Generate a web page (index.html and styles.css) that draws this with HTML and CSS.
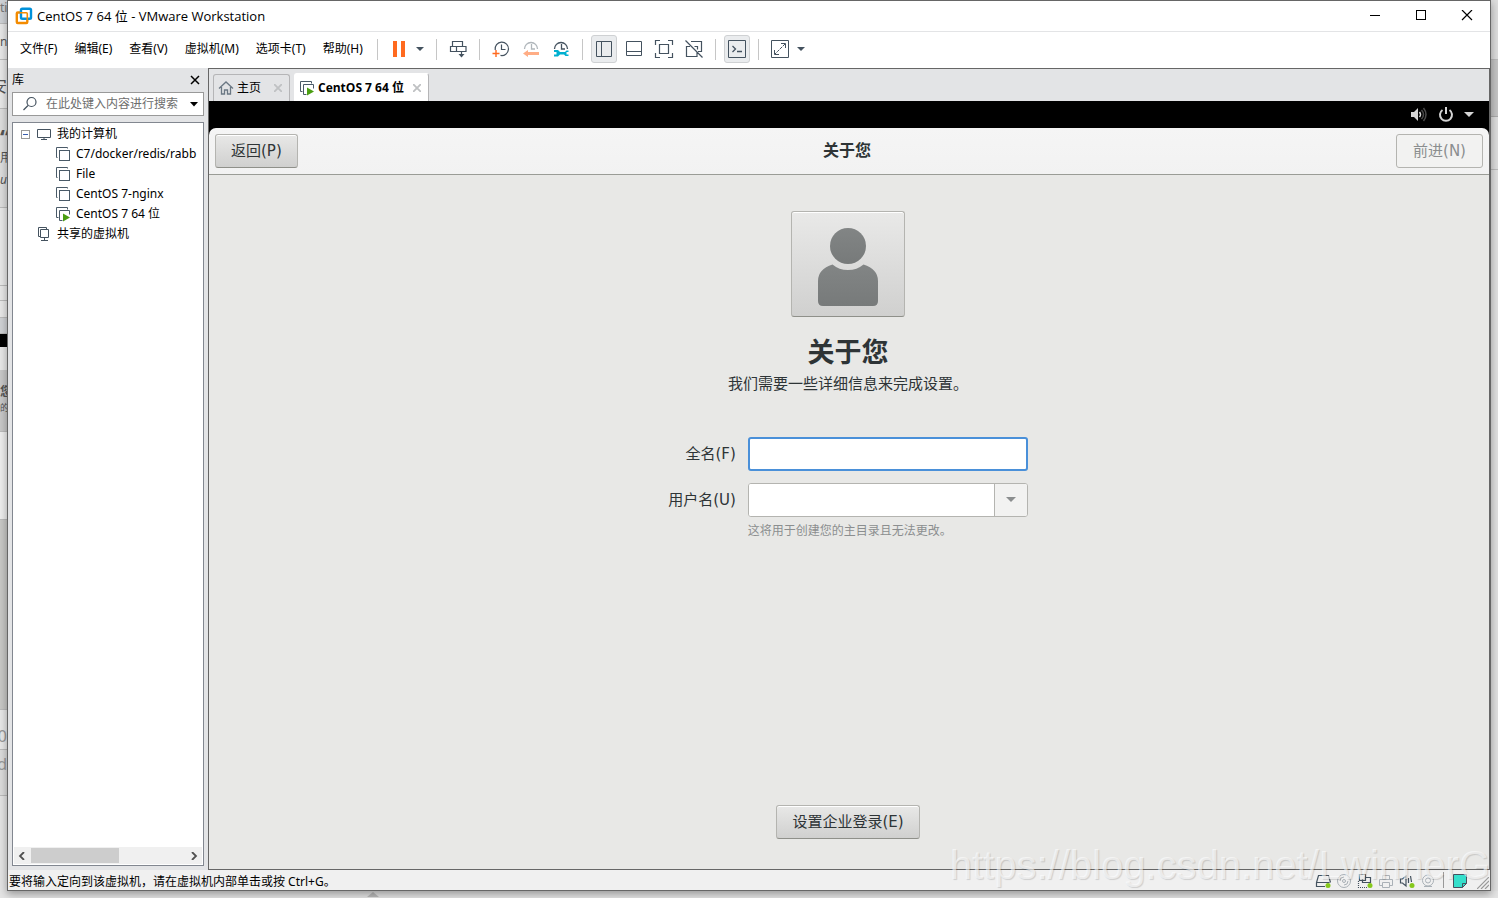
FILE: index.html
```
<!DOCTYPE html>
<html lang="zh-CN">
<head>
<meta charset="utf-8">
<title>CentOS 7 64 位 - VMware Workstation</title>
<link rel="stylesheet" href="styles.css">
</head>
<body>
<svg class="defs" aria-hidden="true">
  <symbol id="vm" viewBox="0 0 16 16"><path d="M1.500 11.500v-10h11" fill="none" stroke="#4a5a68"/><path d="M1.500 11.500h1M12.500 1.500v1" stroke="#4a5a68"/><rect x="4.500" y="4.500" width="10" height="10" fill="#fff" stroke="#4a5a68"/></symbol>
  <symbol id="vmon" viewBox="0 0 16 16"><path d="M3.500 11.500h-2v-10h11v2" fill="none" stroke="#4a5a68"/><path d="M7.500 14.500h-3v-10h10v4" fill="none" stroke="#4a5a68"/><path d="M8 7.500v8l7-4z" fill="#4a9e12"/></symbol>
</svg>
<div class="desktop">
  <div class="behind behind-left" aria-hidden="true">
    <div class="slab s1">ti</div><div class="slab s2">n</div><div class="slab s3">安</div><div class="slab s4"><b>“</b><span>用</span><i>u</i></div><div class="slab s5"></div><div class="slab s6"></div><div class="slab s7"></div><div class="slab s8"></div><div class="slab s9"><b>您</b><small>的</small></div><div class="slab s10"></div><div class="slab s11"></div><div class="slab s12">00</div><div class="slab s13">d</div><div class="slab s14"></div>
  </div>
  <main class="window">
    <header class="titlebar">
      <svg class="logo" width="18" height="18" viewBox="0 0 18 18" fill="none" stroke-width="2.400"><path d="M5 5.500H2.800q-1 0-1 1v8.500q0 1 1 1h8.500q1 0 1-1v-2" stroke="#f38b00"/><rect x="6" y="1.700" width="10" height="10" rx="1.300" stroke="#0091da"/><path d="M5 5.700h6.300q1 0 1 1V13" stroke="#f38b00" stroke-width="1.600"/></svg>
      <span class="caption">CentOS 7 64 位 - VMware Workstation</span>
      <button class="winbtn" aria-label="最小化"><svg width="12" height="12"><path d="M1 5.500h10" stroke="#000"/></svg></button>
      <button class="winbtn" aria-label="最大化"><svg width="12" height="12"><rect x="1.500" y=".5" width="9" height="9" fill="none" stroke="#000"/></svg></button>
      <button class="winbtn" aria-label="关闭"><svg width="12" height="12"><path d="M1 0l10 10M11 0L1 10" stroke="#000" stroke-width="1.200"/></svg></button>
    </header>
    <div class="menubar">
      <nav class="menus"><button>文件(F)</button><button>编辑(E)</button><button>查看(V)</button><button>虚拟机(M)</button><button>选项卡(T)</button><button>帮助(H)</button></nav>
      <div class="tools">
        <i class="sep"></i>
        <span class="group tight"><button class="tool" aria-label="暂停"><svg width="20" height="20"><path d="M4 2h4v16H4zM12 2h4v16h-4z" fill="#ff6a1f"/></svg></button><button class="drop" aria-label="电源选项"><svg width="8" height="5"><path d="M0 0h8L4 4z" fill="#44525f"/></svg></button></span>
        <i class="sep"></i>
        <button class="tool" aria-label="发送按键"><svg width="20" height="20" fill="none" stroke="#44525f" stroke-width="1.200"><path d="M4.500 2.500h10v5h-10zM8.500 7.500v5h-6v-5h15.500v5H8.500M13.500 12.500v4"/><path d="M10.500 15h6l-3 3.500z" fill="#44525f" stroke="none"/></svg></button>
        <i class="sep"></i>
        <span class="group">
          <button class="tool slate" aria-label="拍摄快照"><svg width="20" height="20"><path d="M4.200 11A6.700 6.700 0 1 1 9.500 16.400M10.500 5.500v5h4" fill="none" stroke="currentColor" stroke-width="1.200"/><path d="M1.500 14.500h7M5 11v7" stroke="#ff6a1f" stroke-width="1.400"/></svg></button>
          <button class="tool faded" aria-label="恢复快照"><svg width="20" height="20"><path d="M3.500 10a6.500 6.500 0 1 1 13 0M10.500 5v5h3.500" fill="none" stroke="currentColor" stroke-width="1.300"/><path d="M2 14.500l5-3.500v2h11v3H7v2z" fill="#ffad85"/></svg></button>
          <button class="tool slate" aria-label="管理快照"><svg width="20" height="20"><path d="M3.500 10a6.500 6.500 0 1 1 13 0M10.500 5v5h3.500" fill="none" stroke="currentColor" stroke-width="1.300"/><path d="M3 11h4l2 2h5l1.500-1.500h2V13h-2v2.500h2V17h-3L13 15.500H9L7 17.500H3v-2h2.500V13H3z" fill="#00b0d0"/></svg></button>
        </span>
        <i class="sep"></i>
        <span class="group">
          <button class="tool on" aria-label="显示库"><svg width="20" height="20" fill="none" stroke="#44525f"><path d="M2.500 2.500h15v15h-15zM7.500 2.500v15"/></svg></button>
          <button class="tool" aria-label="缩略图栏"><svg width="20" height="20" fill="none" stroke="#44525f"><path d="M2.500 2.500h15v14h-15zM2.500 12.500h15"/></svg></button>
          <button class="tool" aria-label="全屏"><svg width="20" height="20" fill="none" stroke="#44525f" stroke-width="1.200"><path d="M1.500 6V1.500H6M14 1.500h4.500V6M18.500 14v4.500H14M6 18.500H1.500V14M5.500 5.500h9v9h-9z"/></svg></button>
          <button class="tool" aria-label="Unity"><svg width="20" height="20" fill="none" stroke="#44525f" stroke-width="1.200"><path d="M7 2.500h10.500v10H14M6 7.500H2.500v10h10.500v-4M10.500 7.500h3v3M1.500 1.500l17 17"/></svg></button>
        </span>
        <i class="sep"></i>
        <button class="tool on" aria-label="控制台"><svg width="20" height="20" fill="none" stroke="#44525f"><path d="M1.500 1.500h17v17h-17z"/><path d="M5.500 7l3 3-3 3M10 12.500h5" stroke-width="1.300"/></svg></button>
        <i class="sep"></i>
        <span class="group tight"><button class="tool" aria-label="拉伸"><svg width="20" height="20" fill="none" stroke="#44525f"><path d="M1.500 1.500h17v17h-17zM11 4.500h4.500V9M4.500 11v4.500H9"/><path d="M15 5L5 15" stroke-dasharray="3 1"/></svg></button><button class="drop" aria-label="拉伸选项"><svg width="8" height="5"><path d="M0 0h8L4 4z" fill="#44525f"/></svg></button></span>
      </div>
    </div>
    <div class="workspace">
      <aside class="library">
        <div class="libhead"><span>库</span><button aria-label="关闭库"><svg width="10" height="10"><path d="M1 1l8 8M9 1L1 9" stroke="#000" stroke-width="1.500"/></svg></button></div>
        <label class="search"><svg width="16" height="16" fill="none" stroke="#44525f" stroke-width="1.200"><circle cx="9.500" cy="6" r="4.500"/><path d="M6 9.500L1.500 14"/></svg><input type="text" placeholder="在此处键入内容进行搜索" aria-label="搜索"><svg width="8" height="5"><path d="M0 0h8L4 4.500z"/></svg></label>
        <div class="treebox">
          <ul class="tree">
            <li class="root"><svg width="9" height="9"><rect x=".5" y=".5" width="8" height="8" fill="#fff" stroke="#999"/><path d="M2 4.500h5" stroke="#3a5fb0"/></svg><svg class="pc" width="16" height="16" fill="none" stroke="#44525f"><path d="M1.500 3.500h13v8h-13zM8 11.500v2M5 13.500h6"/></svg><span>我的计算机</span></li>
            <li class="leaf"><svg width="16" height="16"><use href="#vm"/></svg><span>C7/docker/redis/rabb</span></li>
            <li class="leaf"><svg width="16" height="16"><use href="#vm"/></svg><span>File</span></li>
            <li class="leaf"><svg width="16" height="16"><use href="#vm"/></svg><span>CentOS 7-nginx</span></li>
            <li class="leaf"><svg width="16" height="16"><use href="#vmon"/></svg><span>CentOS 7 64 位</span></li>
            <li class="shared"><svg width="16" height="16" fill="none" stroke="#44525f"><path d="M4 10.500H2.500v-9h8V3M4.500 3.500h8v8h-8zM8.500 11.500v3M5 14.500h7"/></svg><span>共享的虚拟机</span></li>
          </ul>
          <div class="hscroll"><svg width="8" height="8" fill="none" stroke="#505050" stroke-width="1.800"><path d="M6 0L2 4l4 4"/></svg><i></i><svg width="8" height="8" fill="none" stroke="#505050" stroke-width="1.800"><path d="M2 0l4 4-4 4"/></svg></div>
        </div>
      </aside>
      <section class="viewer">
        <div class="tabs">
          <div class="tab"><svg width="16" height="16" fill="none" stroke="#6b7884" stroke-width="1.300"><path d="M1 8.500L8 2l7 6.500M3.500 7v7h3v-4h3v4h3V7"/></svg><span>主页</span><button aria-label="关闭主页"><svg width="8" height="8"><path d="M0 0l8 8M8 0L0 8" stroke="#bfc1c3" stroke-width="1.800"/></svg></button></div>
          <div class="tab active"><svg width="16" height="16"><use href="#vmon"/></svg><span>CentOS 7 64 位</span><button aria-label="关闭标签"><svg width="8" height="8"><path d="M0 0l8 8M8 0L0 8" stroke="#bfc1c3" stroke-width="1.800"/></svg></button></div>
        </div>
        <div class="guest">
          <div class="topbar">
            <svg width="18" height="16"><path d="M1 5h3l4-4v13l-4-4H1z" fill="#d5d5d5"/><path d="M9.500 5q2 2.500 0 5" fill="none" stroke="#d5d5d5" stroke-width="1.500"/><path d="M11.500 3q4 4.500 0 9M13.500 1q5 6.500 0 13" fill="none" stroke="#4a4a4a" stroke-width="1.500"/></svg>
            <svg width="16" height="16" fill="none" stroke="#d5d5d5" stroke-width="2"><path d="M4.500 3a6 6 0 1 0 7 0M8 0v7"/></svg>
            <svg width="10" height="6"><path d="M0 0h10L5 5z" fill="#d5d5d5"/></svg>
          </div>
          <div class="headbar"><button class="gbtn">返回(P)</button><h1>关于您</h1><button class="gbtn" disabled>前进(N)</button></div>
          <div class="page">
            <button class="avatar" aria-label="头像"><svg width="60" height="78" viewBox="0 0 60 78"><defs><linearGradient id="g" x2="0" y2="1"><stop stop-color="#828585"/><stop offset="1" stop-color="#777a7a"/></linearGradient></defs><circle cx="30" cy="18" r="18" fill="url(#g)"/><path d="M14.500 36.500Q21 42 30 42t15.500-5.500Q60 41 60 53v20q0 5-5 5H5q-5 0-5-5V53Q0 41 14.500 36.500z" fill="url(#g)"/></svg></button>
            <h2>关于您</h2>
            <p class="intro">我们需要一些详细信息来完成设置。</p>
            <form class="form">
              <label for="full">全名(F)</label><input id="full" class="field focus" type="text">
              <label for="user">用户名(U)</label><div class="combo"><input id="user" type="text"><button type="button" aria-label="选择用户名"><svg width="10" height="6"><path d="M0 0h10L5 5z" fill="#8b8e8f"/></svg></button></div>
              <p class="hint">这将用于创建您的主目录且无法更改。</p>
            </form>
            <button class="gbtn enterprise">设置企业登录(E)</button>
          </div>
        </div>
      </section>
    </div>
    <footer class="status">
      <span class="msg">要将输入定向到该虚拟机，请在虚拟机内部单击或按 Ctrl+G。</span>
      <svg width="16" height="16" fill="none" stroke="#44525f" stroke-width="1.200"><path d="M10 13.500H1.500v-4l2-7h10l2 7M1.500 9.500h13"/><circle cx="13" cy="12.500" r="2.500" fill="#86c81c" stroke="none"/></svg>
      <svg width="16" height="16" fill="none" stroke="#aab1b7"><circle cx="8" cy="8" r="6.500"/><circle cx="8" cy="8" r="1.500"/><path d="M4 8a4 4 0 0 1 4-4M12 8a4 4 0 0 1-4 4"/></svg>
      <svg width="16" height="16" fill="none" stroke="#44525f" stroke-width="1.200"><path d="M2.500 1.500h6v6h-6zM8.500 4.500h5v5h-8v-3"/><path d="M1.500 8v6.500H11" stroke-dasharray="1 1"/><circle cx="13" cy="12.500" r="2.500" fill="#86c81c" stroke="none"/></svg>
      <svg width="16" height="16" fill="none" stroke="#aab1b7"><path d="M4.500 6V2.500h7V6M4.500 12.500h-3v-6h13v6h-3M4.500 9.500h7v5h-7z"/></svg>
      <svg width="16" height="16" fill="none" stroke="#44525f" stroke-width="1.200"><path d="M1.500 6h2L7 3v10L3.500 10h-2zM9.500 5v5M11.500 3l1 6"/><circle cx="13" cy="12.500" r="2.500" fill="#86c81c" stroke="none"/></svg>
      <svg width="16" height="16" fill="none" stroke="#aab1b7"><circle cx="8" cy="7.500" r="5.500"/><circle cx="8" cy="7.500" r="2.500"/><path d="M4 13.500h8"/></svg>
      <i class="ssep"></i>
      <svg class="note" width="14" height="14"><path d="M.5.500h13v9l-4 4h-9z" fill="#35dfcb" stroke="#44525f"/><path d="M13.500 9.500h-4v4" fill="none" stroke="#44525f"/></svg>
      <svg class="grip" width="12" height="12" stroke="#999" stroke-width="1.200"><path d="M0 12L12 0M4 12l8-8M8 12l4-4"/></svg>
    </footer>
  </main>
  <div class="behind behind-right" aria-hidden="true"><div class="r1"></div><div class="r2"></div><div class="r3"></div><div class="r4"></div></div>
  <div class="behind-bottom" aria-hidden="true"><svg width="14" height="6"><path d="M1 6l6-5 6 5z" fill="#bbb"/></svg></div>
  <div class="watermark">https://blog.csdn.net/LwinnerG</div>
</div>
</body>
</html>
```
FILE: styles.css
```
*{box-sizing:border-box}
body{margin:0;font:12px/16px "Noto Sans","Noto Sans CJK SC",sans-serif;color:#000;background:#e4e4e4}
button{font:inherit;color:inherit;background:none;border:0;padding:0;margin:0}
input{font:inherit;padding:0;margin:0;border:0;outline:0;min-width:0}
svg{display:block;flex:none}
h1,h2,p,ul{margin:0;padding:0}
.defs{position:absolute;width:0;height:0}
.desktop{position:relative;display:grid;grid-template:minmax(0,1fr) 7px / 7px minmax(0,1fr) 7px;height:100vh;overflow:hidden}
.window{display:flex;flex-direction:column;border:1px solid #666;background:#f0f0f0;box-shadow:0 3px 8px rgba(0,0,0,.35);z-index:1}
.behind{display:flex;flex-direction:column;overflow:hidden;background:#dcdcdc}
.slab{flex:none;overflow:hidden;color:#555;background:#e8e8e8;border-bottom:1px solid #bbb}
.s1{height:24px;background:#cfd2d6;color:#777}
.s2{height:36px;padding-top:10px}
.s3{display:flex;justify-content:flex-end;height:49px;padding-top:18px;font-size:16px}
.s4{height:99px;padding-top:16px;line-height:22px;background:#dedede}
.s4 b,.s4 span,.s4 i{display:block}
.s4 b{font-size:22px}
.s5{height:78px}.s6{height:15px}.s7{height:17px}
.s8{height:16px;background:#d0d2d5}
.s9{height:98px;padding-top:50px;background:linear-gradient(#000 0 13px,#e8e8e8 13px 36px,#c8c8c8 36px)}
.s9 b,.s9 small{display:block}
.s9 small{font-size:9px}
.s10{height:88px;background:#eee}
.s11{height:190px;background:#c8c8c6}
.s12{display:flex;justify-content:flex-end;height:40px;padding-top:18px;font-size:16px;color:#999}
.s13{display:flex;justify-content:flex-end;height:46px;padding-top:6px;font-size:16px;color:#999;background:#dcdcdc}
.s14{flex:1;border:0;background:#e4e4e4}
.behind-right .r1{height:60px;background:#ddd;border-bottom:1px solid #bbb}
.behind-right .r2{height:57px;background:#c4c4c4;border-bottom:1px solid #aaa}
.behind-right .r3{height:53px;background:#ddd;border-bottom:1px solid #bbb}
.behind-right .r4{flex:1;background:#e0e0e0}
.behind-bottom{grid-column:1/-1;padding-left:366px}
.titlebar{display:flex;align-items:center;height:31px;padding-left:7px;background:#fff;border-bottom:1px solid #e3e4e6}
.caption{flex:1;padding-left:4px;font-family:"Open Sans","Noto Sans CJK SC",sans-serif;font-size:13px}
.winbtn{display:grid;place-items:center;width:46px;height:30px}
.menubar{display:flex;align-items:center;height:36px;padding:0 0 2px 4px;background:#fff}
.menus,.tools,.group{display:flex;align-items:center}
.menus{width:365px;gap:1px}
.menus button{padding:0 8px;white-space:nowrap}
.group{gap:4px}
.group.tight{gap:0}
.tool{display:grid;place-items:center;width:26px;height:28px;border-radius:3px}
.tool.on{background:#eaecee;border:1px solid #cfd1d3}
.drop{display:grid;place-items:center;width:16px;height:28px}
.slate{color:#44525f}
.faded{color:#b0b6bb}
.sep{width:1px;height:21px;margin:0 8px;background:#c6c6c6}
.tools .sep:first-child{margin-left:0}
.workspace{flex:1;display:flex;min-height:0}
.library{width:200px;display:flex;flex-direction:column;padding:0 4px 4px;background:#e3e4e6}
.libhead{display:flex;align-items:center;justify-content:space-between;height:24px;padding-right:4px}
.search{display:flex;align-items:center;height:24px;padding:0 5px 0 9px;border:1px solid #999;background:#fff}
.search input{flex:1;padding-left:8px;background:none}
.search input::placeholder{color:#6d6d6d;opacity:1}
.treebox{flex:1;display:flex;flex-direction:column;min-height:0;margin-top:6px;border:1px solid #828790;background:#fff}
.tree{flex:1;padding-top:1px;list-style:none;overflow:hidden}
.tree li{display:flex;align-items:center;height:20px;white-space:nowrap}
.tree .root{padding-left:8px}
.root .pc{margin:0 5px 0 6px}
.leaf{padding-left:42px;gap:5px}
.shared{padding-left:23px;gap:5px}
.hscroll{display:flex;align-items:center;justify-content:space-between;height:17px;margin:1px;padding:0 4px;background:#f0f0f0}
.hscroll i{width:88px;height:15px;margin:0 auto 0 5px;background:#cdcdcd}
.viewer{flex:1;display:flex;flex-direction:column;min-width:0;border:1px solid #666}
.tabs{display:flex;align-items:flex-end;gap:4px;height:32px;padding-left:4px;background:#e3e4e6}
.tab{display:flex;align-items:center;width:77px;height:27px;padding:0 7px 0 4px;border:1px solid #b5b5b7;border-bottom:0;border-radius:3px 3px 0 0}
.tab span{flex:1;padding-left:3px;white-space:nowrap}
.tab.active{width:135px;height:28px;border-color:#fff #b5b5b7 #fff #fff;background:#fff;font-family:"Open Sans","Noto Sans CJK SC",sans-serif;font-weight:700}
.guest{flex:1;display:flex;flex-direction:column;background:#000;font:15px/20px "DejaVu Sans","Noto Sans CJK SC",sans-serif;color:#2e3436}
.topbar{display:flex;align-items:center;justify-content:flex-end;gap:10px;height:27px;padding-right:15px}
.headbar{display:flex;align-items:center;justify-content:space-between;height:47px;padding:0 6px;background:linear-gradient(#f5f5f5,#f2f2f2);border-bottom:1px solid #9a9c96;border-radius:7px 7px 0 0}
.headbar h1{font-size:16px;font-weight:700}
.gbtn{height:34px;padding:0 15px;border:1px solid #b4b4b0;border-bottom-color:#8f908a;border-radius:3px;background:linear-gradient(#e8e8e7,#d0d0cf);box-shadow:inset 0 1px #fff;white-space:nowrap}
.gbtn:disabled{padding:0 16px;color:#8b8e8f;background:#f2f2f1;border-color:#b4b4b0;box-shadow:none}
.page{flex:1;display:flex;flex-direction:column;align-items:center;padding:36px 2px 30px 0;background:#e8e8e6}
.avatar{display:grid;place-items:center;width:114px;height:106px;padding-top:6px;border:1px solid #b4b4b0;border-bottom-color:#8f908a;border-radius:3px;background:linear-gradient(#e9e9e8,#d0d0cf);box-shadow:inset 0 1px #fff}
.page h2{margin-top:16px;font-size:27px;line-height:40px;font-weight:700}
.intro{margin-top:1px}
.form{display:grid;grid-template-columns:auto 280px;column-gap:12px;row-gap:12px;align-items:center;margin-top:43px}
.form label{text-align:right}
.field{height:34px;padding:0 8px;border:2px solid #4a90d9;border-radius:3px;background:#fff}
.combo{display:flex;height:34px;border:1px solid #b4b4b0;border-radius:3px;background:#fff;overflow:hidden}
.combo input{flex:1;padding:0 8px}
.combo button{display:grid;place-items:center;width:33px;border-left:1px solid #b4b4b0;background:#f2f2f1}
.hint{grid-column:2;margin-top:-8px;font-size:12px;color:#8b8e8f}
.enterprise{margin-top:auto}
.status{display:flex;align-items:center;gap:5px;height:20px;padding-right:1px;background:#f0f0f0}
.msg{flex:1;padding:3px 0 0 1px}
.status svg{margin-top:2px}
.ssep{width:1px;height:16px;margin:0 4px 0 2px;background:#999}
.status .grip{margin:6px 0 0 5px}
.watermark{position:absolute;right:8px;bottom:11px;z-index:2;font:40px/44px "Liberation Sans",sans-serif;color:rgba(255,255,255,.6);text-shadow:1px 1px 1px rgba(0,0,0,.14);white-space:nowrap;pointer-events:none}
```
